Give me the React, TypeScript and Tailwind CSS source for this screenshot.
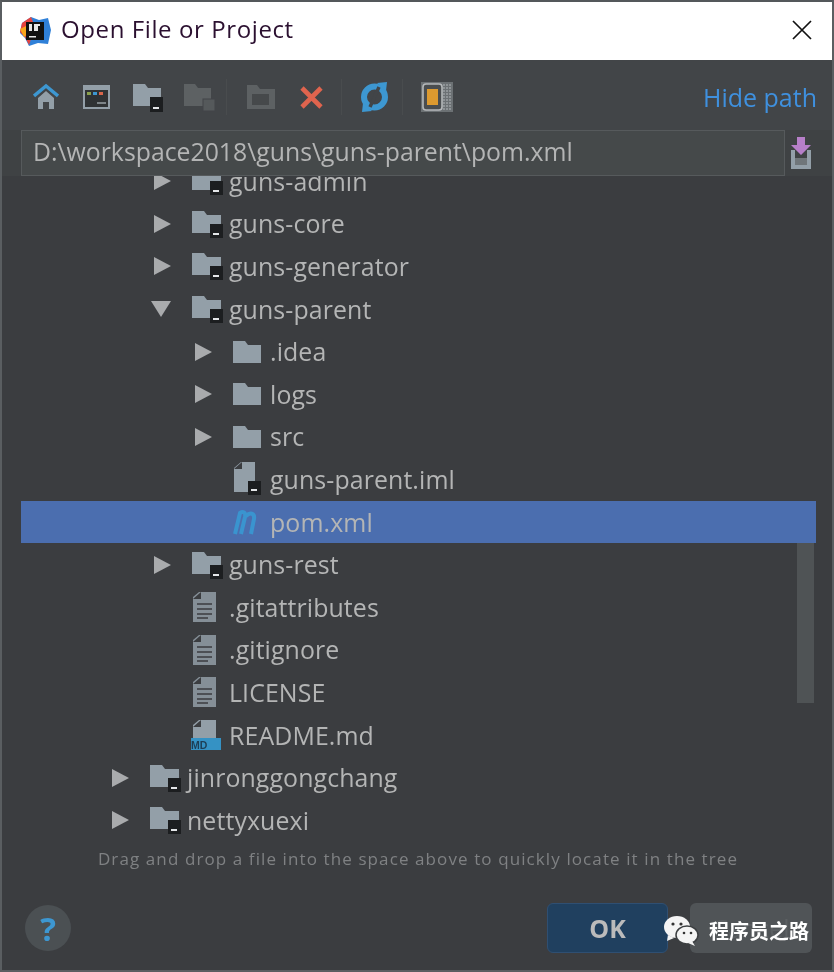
const font = "font-['Open_Sans','Noto_Sans',sans-serif]";

function ModuleFolder() {
  return (
    <svg width="32" height="32" viewBox="0 0 32 32" className="shrink-0">
      <path d="M1 3h12l3 4h14v18H1z" fill="#939fa8" />
      <rect x="19" y="16" width="13" height="14" fill="#1c1e20" />
      <rect x="22" y="25" width="6" height="2" fill="#e4e6e8" />
    </svg>
  );
}
function PlainFolder() {
  return (
    <svg width="30" height="30" viewBox="0 0 30 30" className="shrink-0">
      <path d="M1 4h12l3 4h13v18H1z" fill="#939fa8" />
    </svg>
  );
}
function TextFile({ md }: { md?: boolean }) {
  return (
    <svg width="30" height="32" viewBox="0 0 30 32" className="shrink-0">
      {md ? (
        <>
          <path d="M2 6l6-5h17v19H2z" fill="#939fa8" />
          <path d="M2 8h8V1" fill="#3b3d40" />
          <rect x="-2" y="19" width="32" height="12" fill="#3592c4" />
          <text x="0" y="29.5" fontSize="10.5" fontFamily="Liberation Sans" fontWeight="700" fill="#1d3f56">MD</text>
        </>
      ) : (
        <>
          <path d="M2 6l6-5h17v30H2z" fill="#858f97" />
          <path d="M2 8h8V1" fill="#3b3d40" />
          <g stroke="#3b3d40" strokeWidth="1.6">
            <path d="M6 13h15M6 18h15M6 23h15M6 27h11" />
          </g>
        </>
      )}
    </svg>
  );
}
function ImlFile() {
  return (
    <svg width="30" height="36" viewBox="0 0 30 36" className="shrink-0">
      <path d="M2 7l7-6h14v30H2z" fill="#939fa8" />
      <path d="M2 8h8V1" fill="#3b3d40" />
      <rect x="16" y="20" width="13" height="14" fill="#1c1e20" />
      <rect x="19" y="28" width="6" height="2" fill="#e4e6e8" />
    </svg>
  );
}
function Maven() {
  return (
    <svg width="30" height="28" viewBox="0 0 30 28" className="shrink-0">
      <path d="M3 26L8 5c3-2 6-1 5 4l-4 17M14 8c4-4 9-3 8 3l-3 15" fill="none" stroke="#3a94cf" strokeWidth="4" />
    </svg>
  );
}
function Arrow({ open }: { open?: boolean }) {
  return open ? (
    <svg width="20" height="16" viewBox="0 0 20 16" className="-ml-[3px] shrink-0">
      <path d="M0 0h20L10 16z" fill="#a9abad" />
    </svg>
  ) : (
    <svg width="17" height="18" viewBox="0 0 17 18" className="shrink-0">
      <path d="M0 0l17 9L0 18z" fill="#a9abad" />
    </svg>
  );
}

type Row = { label: string; level: number; icon: string; arrow?: "open" | "closed"; sel?: boolean };
const rows: Row[] = [
  { label: "guns-admin", level: 1, icon: "module", arrow: "closed" },
  { label: "guns-core", level: 1, icon: "module", arrow: "closed" },
  { label: "guns-generator", level: 1, icon: "module", arrow: "closed" },
  { label: "guns-parent", level: 1, icon: "module", arrow: "open" },
  { label: ".idea", level: 2, icon: "folder", arrow: "closed" },
  { label: "logs", level: 2, icon: "folder", arrow: "closed" },
  { label: "src", level: 2, icon: "folder", arrow: "closed" },
  { label: "guns-parent.iml", level: 2, icon: "iml" },
  { label: "pom.xml", level: 2, icon: "maven", sel: true },
  { label: "guns-rest", level: 1, icon: "module", arrow: "closed" },
  { label: ".gitattributes", level: 1, icon: "text" },
  { label: ".gitignore", level: 1, icon: "text" },
  { label: "LICENSE", level: 1, icon: "text" },
  { label: "README.md", level: 1, icon: "md" },
  { label: "jinronggongchang", level: 0, icon: "module", arrow: "closed" },
  { label: "nettyxuexi", level: 0, icon: "module", arrow: "closed" },
];

function RowIcon({ icon }: { icon: string }) {
  if (icon === "module") return <ModuleFolder />;
  if (icon === "folder") return <PlainFolder />;
  if (icon === "iml") return <ImlFile />;
  if (icon === "maven") return <Maven />;
  if (icon === "md") return <TextFile md />;
  return <TextFile />;
}

const indent = ["pl-[91px]", "pl-[133px]", "pl-[174px]"];

function TreeRow({ r }: { r: Row }) {
  return (
    <div className={`flex h-[42.6px] items-center ${indent[r.level]} ${r.sel ? "bg-[#4b6eaf]" : ""}`}>
      <div className="flex w-[37px] justify-start">{r.arrow ? <Arrow open={r.arrow === "open"} /> : null}</div>
      <div className="flex w-[38px] justify-start">
        <RowIcon icon={r.icon} />
      </div>
      <span className="text-[24.9px] leading-none tracking-[0.1px] text-[#b4b5b5]">{r.label}</span>
    </div>
  );
}

export default function App() {
  return (
    <div className={`relative flex h-[972px] w-[834px] flex-col overflow-hidden border-2 border-[#5a5e61] border-t-[#54585b] bg-[#3b3d40] blur-[0.4px] ${font}`}>
      {/* title bar */}
      <div className="flex h-[58px] shrink-0 items-center justify-between bg-white pl-[17px] pr-[19px]">
        <div className="flex items-center gap-[10px]">
          <svg width="32" height="32" viewBox="0 0 32 32">
            <path d="M3 8L12 2l8 3 9-2 3 12-3 14-10-1-9 3-4-8-5-5z" fill="#2f80d8" />
            <path d="M3 8l9-6 4 10-6 18-4-8-5-5z" fill="#e8433d" />
            <path d="M1 14l6-3 2 8-4 3z" fill="#f7a51c" />
            <rect x="7" y="7" width="18" height="18" fill="#111" />
            <path d="M10 9h3v7h-3zM15 9h6v2h-2v5h-4z" fill="#e8e8e8" />
            <rect x="10" y="21" width="7" height="1.5" fill="#e8e8e8" />
          </svg>
          <span className="mb-[4px] text-[24px] leading-none tracking-[0.6px] text-[#2b1030]">Open File or Project</span>
        </div>
        <svg width="20" height="20" viewBox="0 0 20 20" className="mb-[2px] mr-[1px]">
          <path d="M1 1l18 18M19 1L1 19" stroke="#111" strokeWidth="1.7" />
        </svg>
      </div>

      {/* toolbar */}
      <div className="flex h-[70px] shrink-0 items-center justify-between bg-[#424548] pl-[31px] pr-[15px] pt-[4px]">
        <div className="flex items-center">
          <svg width="26" height="28" viewBox="0 0 26 28" className="mr-[24px]">
            <path d="M1 13L13 3l12 10" fill="none" stroke="#3d97d1" strokeWidth="3.4" />
            <path d="M5 15l8-7 8 7v11h-5v-7h-6v7H5z" fill="#939fa8" />
          </svg>
          <svg width="27" height="24" viewBox="0 0 27 24" className="mr-[23px]">
            <rect x="1" y="1" width="25" height="22" fill="#2f3234" stroke="#939fa8" strokeWidth="2" />
            <rect x="1" y="1" width="25" height="4" fill="#939fa8" />
            <rect x="4" y="7" width="4" height="3" fill="#8aa04c" />
            <rect x="10" y="7" width="4" height="3" fill="#3d97d1" />
            <rect x="16" y="7" width="4" height="3" fill="#d8654a" />
            <rect x="14" y="17" width="9" height="2" fill="#7d8488" />
          </svg>
          <svg width="30" height="30" viewBox="0 0 30 30" className="mr-[21px]">
            <path d="M0 2h12l3 4h13v18H0z" fill="#939fa8" />
            <rect x="17" y="15" width="13" height="15" fill="#1c1e20" />
            <rect x="20" y="25" width="6" height="2" fill="#e4e6e8" />
          </svg>
          <svg width="31" height="30" viewBox="0 0 31 30" className="mr-[11px]">
            <path d="M0 2h11l3 4h13v18H0z" fill="#5d6163" />
            <rect x="19" y="17" width="12" height="12" fill="#55595b" stroke="#424548" />
          </svg>
          <div className="mr-[20px] h-[36px] w-px bg-[#494c4e]" />
          <svg width="28" height="26" viewBox="0 0 28 26" className="mr-[24px]">
            <path d="M0 1h10l3 4h15v20H0z" fill="#5d6163" />
            <rect x="5" y="10" width="17" height="11" fill="#46494b" />
          </svg>
          <svg width="25" height="23" viewBox="0 0 25 23" className="mr-[17px]">
            <path d="M3 2l19 19M22 2L3 21" stroke="#e0644e" strokeWidth="4.6" />
          </svg>
          <div className="mr-[18px] h-[36px] w-px bg-[#494c4e]" />
          <svg width="29" height="30" viewBox="0 0 29 30" className="mr-[13px]">
            <circle cx="14.5" cy="15" r="10.5" fill="none" stroke="#3d97d1" strokeWidth="6" />
            <path d="M10 25l9-20" stroke="#424548" strokeWidth="3.4" />
            <path d="M17 1l10-1-1 9zM12 29L2 30l1-9z" fill="#3d97d1" />
          </svg>
          <div className="mr-[18px] h-[36px] w-px bg-[#494c4e]" />
          <svg width="32" height="30" viewBox="0 0 32 30">
            <rect x="0" y="0" width="32" height="30" fill="#6c7174" />
            <path d="M20 2v26M23 2v26M26 2v26M29 2v26" stroke="#8f9497" strokeWidth="2" strokeDasharray="2 1" />
            <rect x="2" y="2" width="19" height="26" rx="3" fill="#4a4d4f" stroke="#b5b8ba" strokeWidth="1.6" />
            <rect x="6" y="7" width="11" height="16" fill="#dd9a2f" />
          </svg>
        </div>
        <span className="text-[25px] leading-none text-[#3f90de]">Hide path</span>
      </div>

      {/* path field */}
      <div className="flex shrink-0 items-center bg-[#3f4244] pl-[19px] pr-[18px]">
        <div className="flex h-[46px] w-[764px] items-center border border-[#565a5c] bg-[#45494a] pl-[11px]">
          <span className="mb-[4px] text-[24.8px] leading-none text-[#b4b5b5]">D:\workspace2018\guns\guns-parent\pom.xml</span>
        </div>
        <svg width="24" height="34" viewBox="0 0 24 34" className="ml-[4px]">
          <path d="M2 14h4v15h12V14h4v19H2z" fill="#939fa8" />
          <rect x="6" y="22" width="12" height="7" fill="#70767a" />
          <path d="M8 1h8v8h6L12 19 2 9h6z" fill="#b77fc9" />
        </svg>
      </div>

      {/* tree */}
      <div className="relative h-[668px] shrink-0 overflow-hidden">
        <div className="-mt-[16px] ml-[19px] mr-[16px]">
          {rows.map((r) => (
            <TreeRow key={r.label} r={r} />
          ))}
        </div>
        <div className="absolute left-[795px] top-[367px] h-[160px] w-[17px] bg-[#4f5355]" />
      </div>

      {/* hint */}
      <div className="mt-[5px] flex shrink-0 justify-center">
        <span className="whitespace-nowrap pl-[2px] text-[17px] leading-[20px] tracking-[1.1px] text-[#7f8183]">
          Drag and drop a file into the space above to quickly locate it in the tree
        </span>
      </div>

      {/* footer */}
      <div className="mt-[34px] flex shrink-0 items-center justify-between pl-[23px] pr-[20px]">
        <div className="flex h-[46px] w-[46px] items-center justify-center rounded-full bg-[#4b5053]">
          <span className="text-[33px] font-bold leading-none text-[#3d97d1]">?</span>
        </div>
        <div className="flex gap-[22px]">
          <div className="flex h-[50px] w-[121px] items-center justify-center rounded-[6px] border border-[#2f4f72] bg-[#20405f]">
            <span className="text-[25px] font-bold leading-none text-[#bbbbbb]">OK</span>
          </div>
          <div className="flex h-[50px] w-[122px] items-center justify-center rounded-[6px] bg-[#505457]">
            <span className="text-[25px] leading-none text-[#5c6063]">Cancel</span>
          </div>
        </div>
      </div>

      {/* watermark */}
      <div className="absolute left-[661px] top-[913px] flex items-center gap-[10px]">
        <svg width="36" height="32" viewBox="0 0 36 32">
          <ellipse cx="14" cy="12" rx="13" ry="11" fill="#f4f4f4" />
          <path d="M5 20l-1 6 7-3z" fill="#f4f4f4" />
          <ellipse cx="24" cy="20" rx="11" ry="9" fill="#f4f4f4" stroke="#3c3f41" strokeWidth="1.5" />
          <path d="M29 26l3 5-7-3z" fill="#f4f4f4" />
          <circle cx="10" cy="9" r="1.6" fill="#333" />
          <circle cx="18" cy="9" r="1.6" fill="#333" />
          <circle cx="21" cy="18" r="1.3" fill="#333" />
          <circle cx="28" cy="18" r="1.3" fill="#333" />
        </svg>
        <span className="font-['Noto_Sans_CJK_SC',sans-serif] text-[20px] font-bold leading-none text-white">程序员之路</span>
      </div>
    </div>
  );
}
